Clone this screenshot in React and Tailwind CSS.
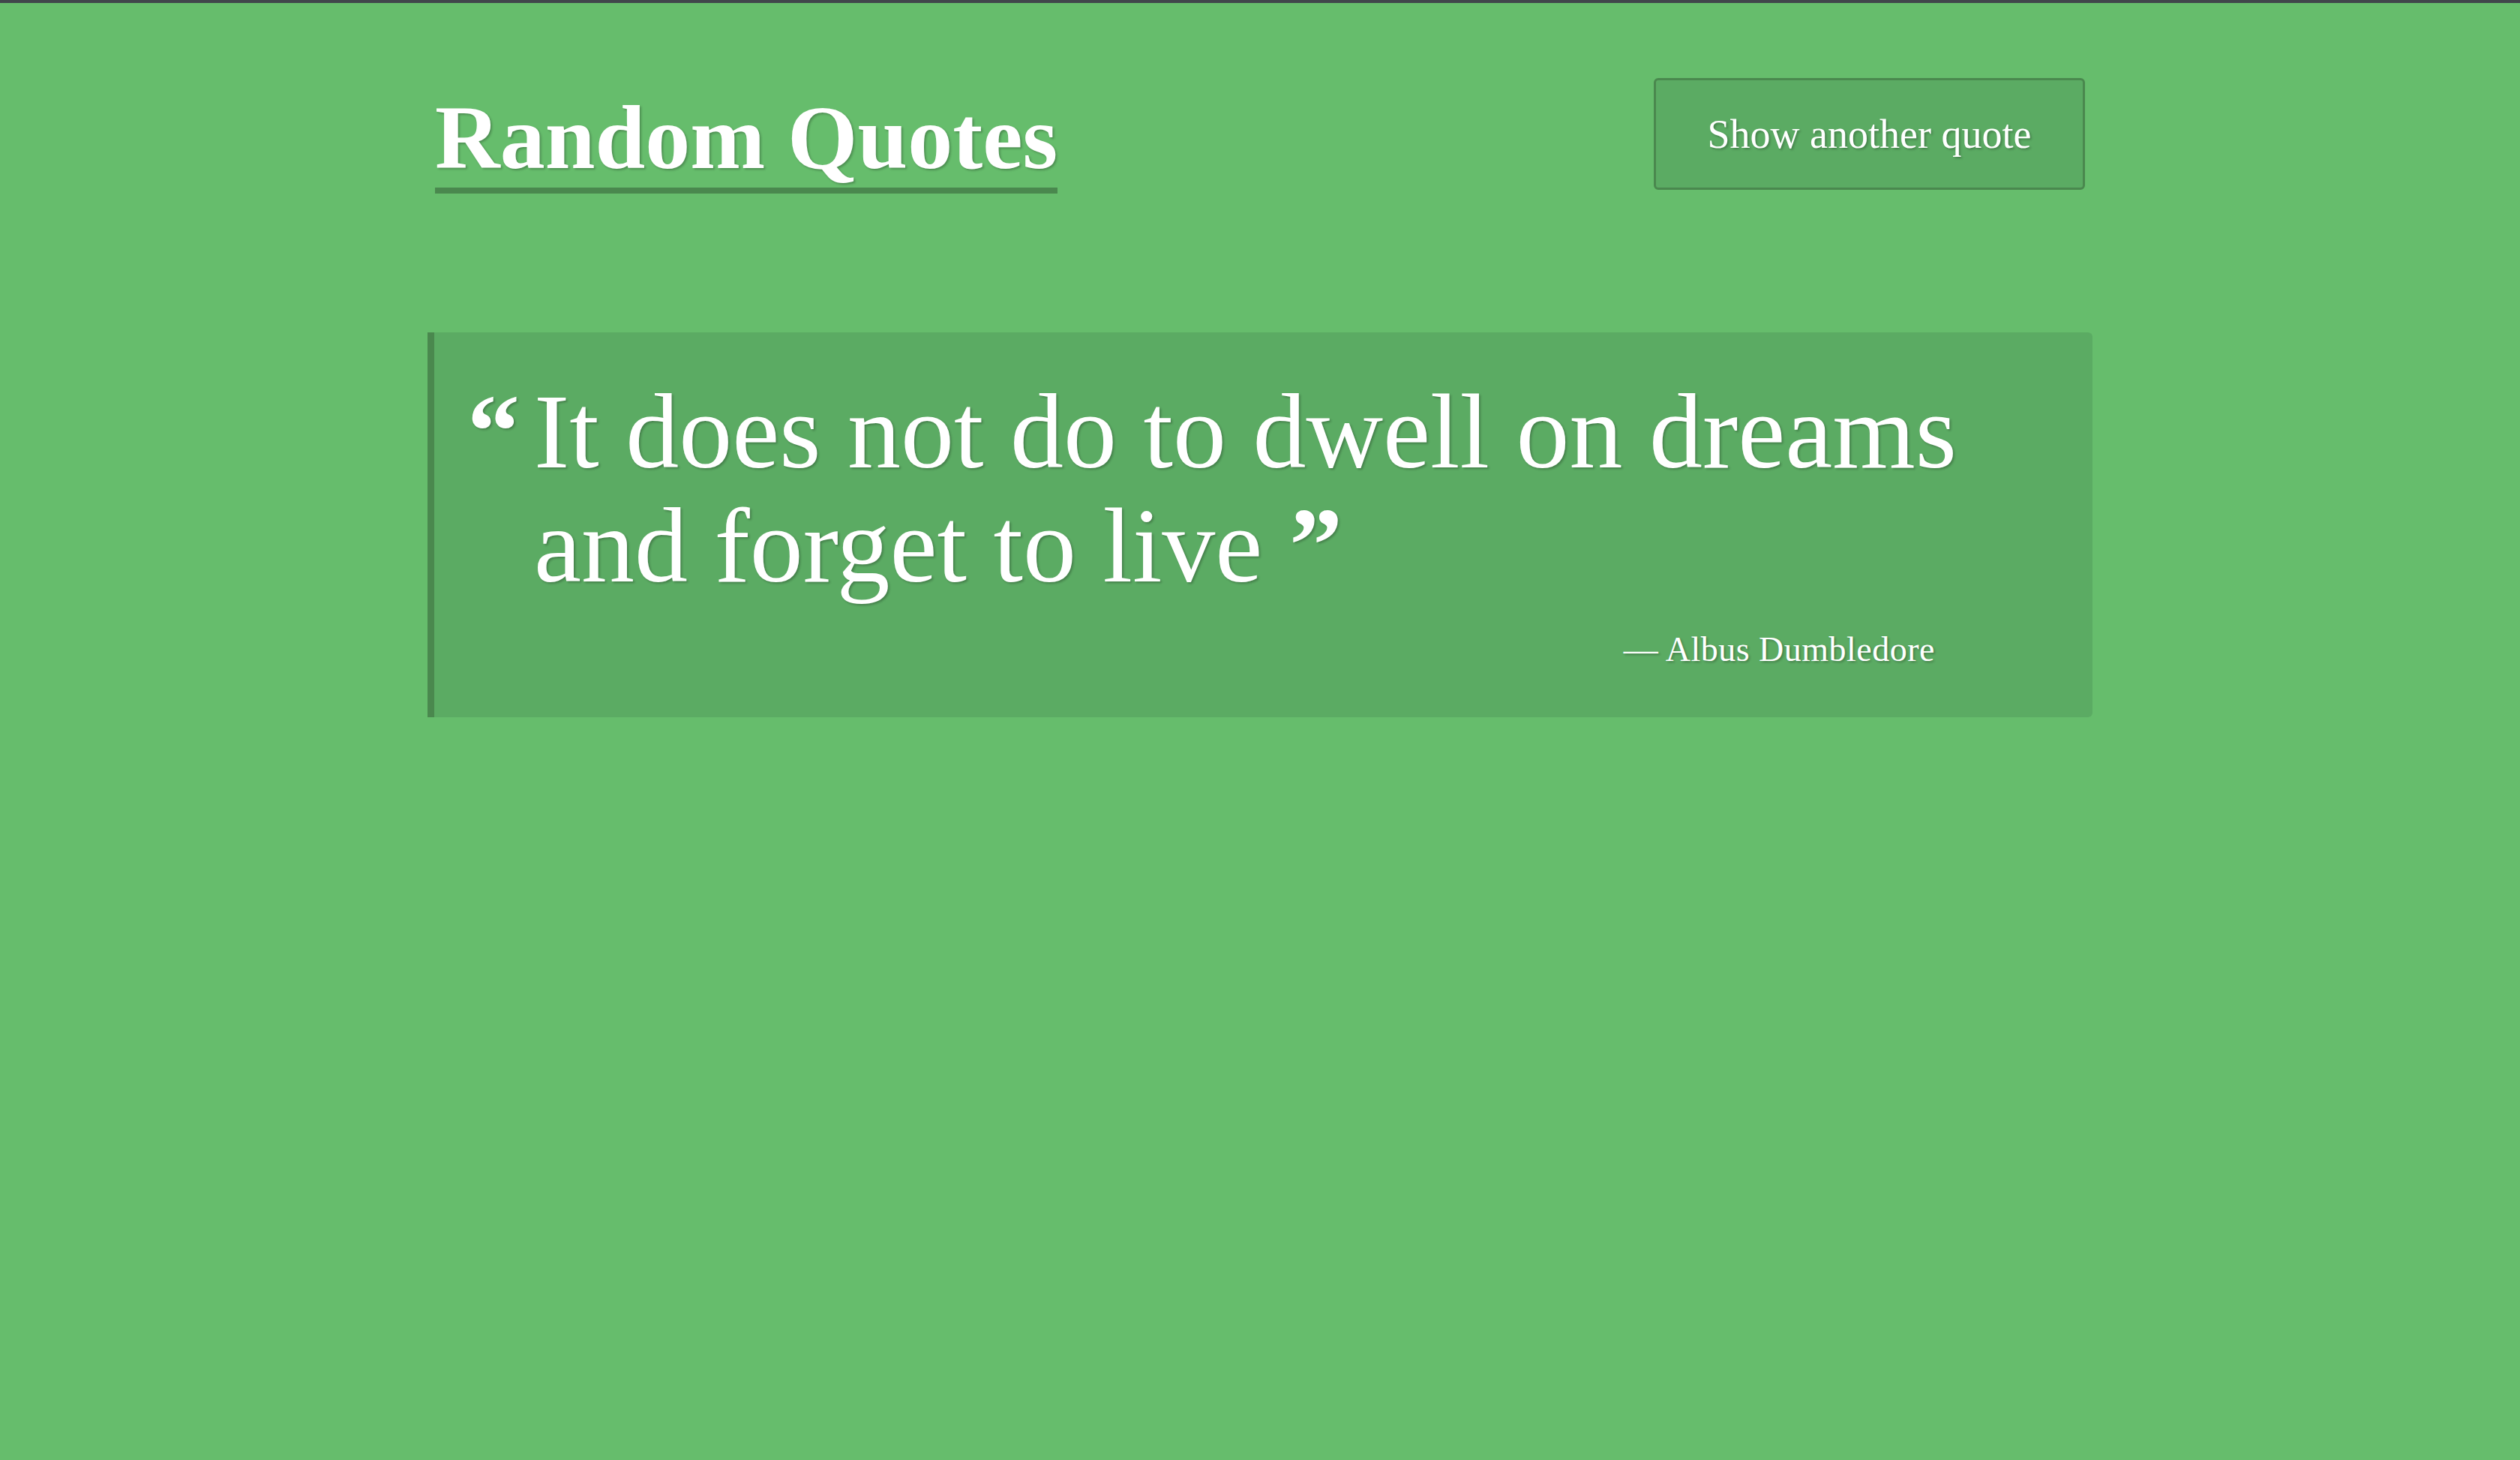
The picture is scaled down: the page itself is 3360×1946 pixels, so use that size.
const QUOTE = {
  text: 'It does not do to dwell on dreams and forget to live',
  author: 'Albus Dumbledore',
};

const serif = "font-['Liberation_Serif','Times_New_Roman',serif]";
const shadow = '[text-shadow:2px_2px_3px_rgba(0,0,0,0.25)]';

export default function App() {
  return (
    <div className={`min-h-screen bg-[#66bd6c] border-t-4 border-[#41464b] text-white ${serif}`}>
      <div className="mx-auto w-[2200px]">
        {/* Header */}
        <header className="flex justify-between items-start pt-[100px]">
          <h1 className={`mt-[20px] text-[120px] font-bold leading-none pb-[6px] border-b-8 border-[#4a884e] ${shadow}`}>
            Random Quotes
          </h1>
          <button
            className={`w-[575px] h-[149px] bg-[#5bab63] border-[3px] border-[#4a884e] rounded-md text-[54px] leading-none ${shadow}`}
          >
            Show another quote
          </button>
        </header>

        {/* Quote */}
        <blockquote className="-mx-[10px] mt-[185px] bg-[#5bab63] border-l-[9px] border-[#4a884e] rounded-r-md pl-[44px] pr-[50px] pt-[56px] pb-[67px]">
          <div className="flex items-start">
            <span className={`w-[89px] shrink-0 text-[140px] font-bold leading-[152px] ${shadow}`}>“</span>
            <div className="flex-1">
              <p className={`text-[142px] leading-[152px] ${shadow}`}>
                {QUOTE.text}&nbsp;<span className="font-bold">”</span>
              </p>
              <p className={`mt-[40px] mr-[160px] text-right text-[46px] leading-none tracking-[0.5px] ${shadow}`}>
                — {QUOTE.author}
              </p>
            </div>
          </div>
        </blockquote>
      </div>
    </div>
  );
}
